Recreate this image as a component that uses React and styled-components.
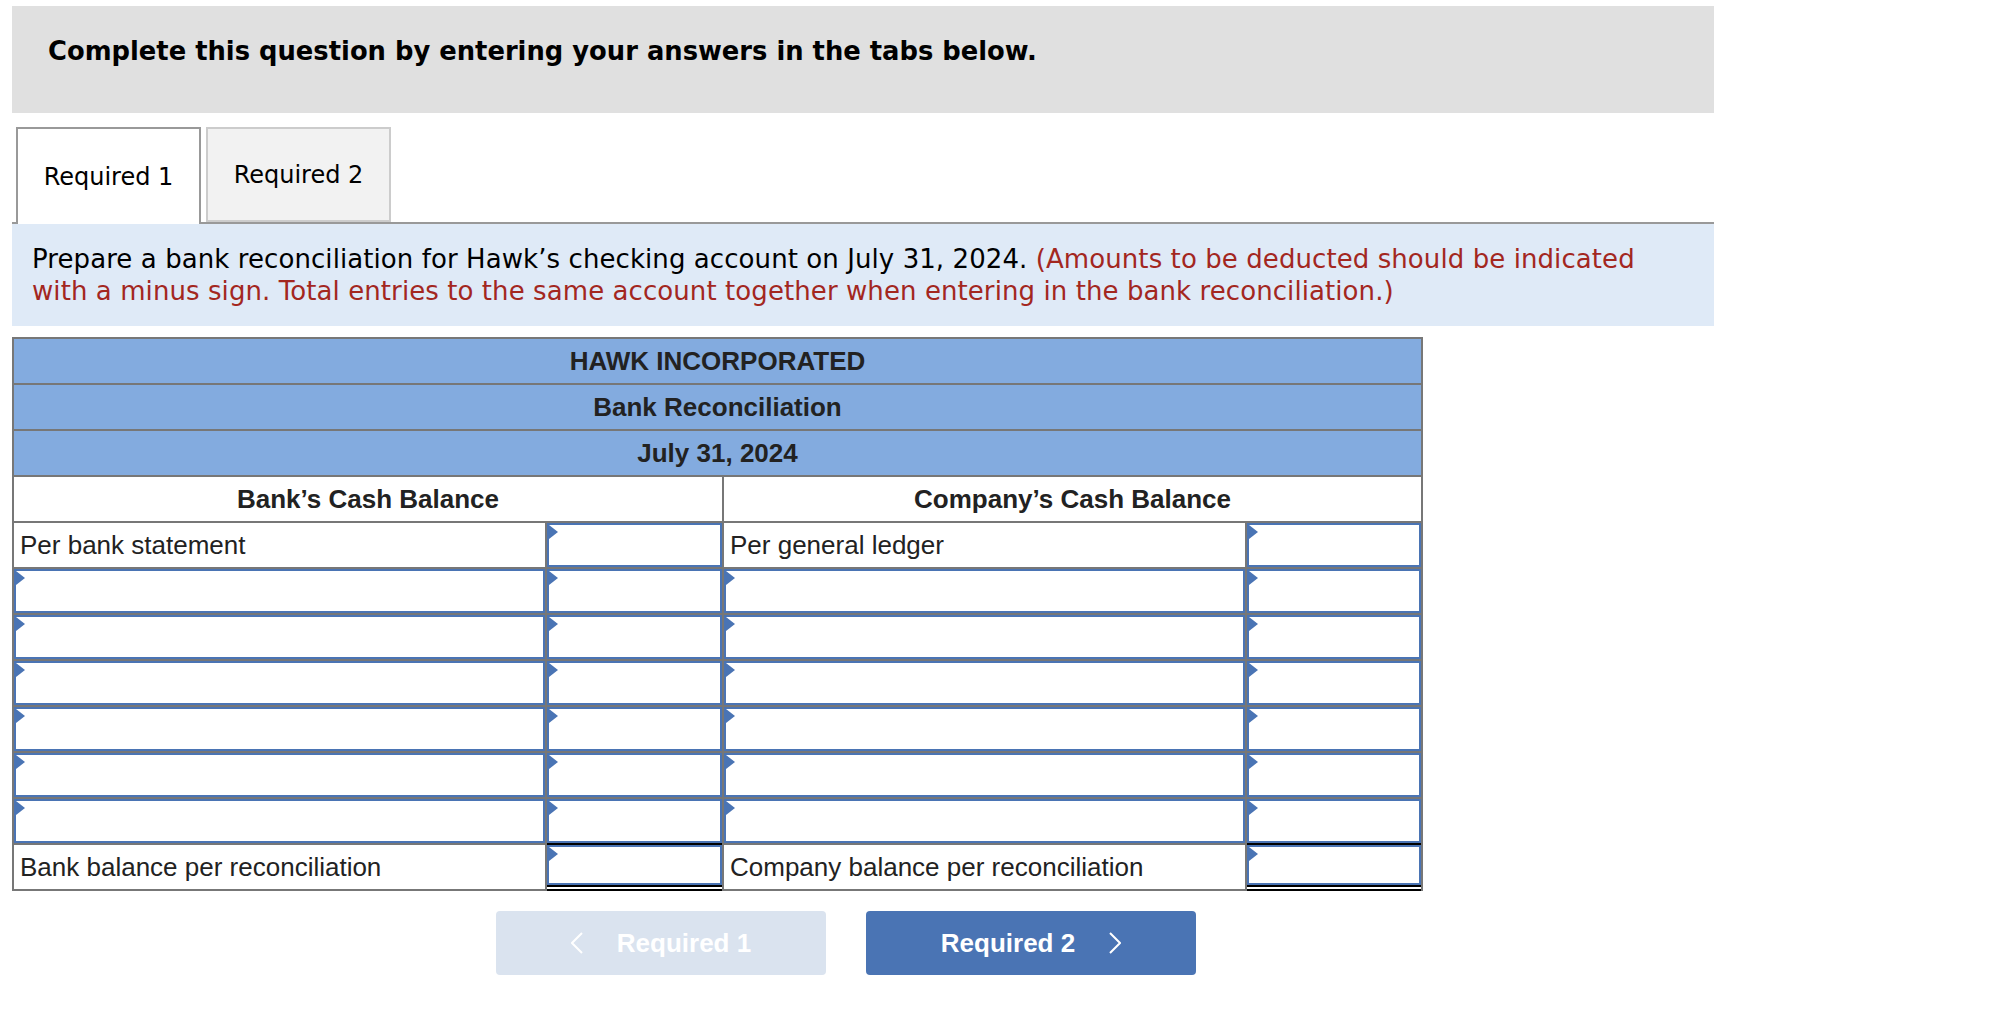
import React from "react";
import styled, { createGlobalStyle } from "styled-components";

const GlobalStyle = createGlobalStyle`
  html, body {
    margin: 0;
    padding: 0;
    background: #fff;
  }
  body {
    font-family: "DejaVu Sans", Verdana, sans-serif;
    color: #000;
  }
`;

const BLUE = "#4a74b4";
const GRID = "#777";

function Page() {
  return (
    <Wrapper>
      <Banner>Complete this question by entering your answers in the tabs below.</Banner>

      <TabBar>
        <Tab $active>Required 1</Tab>
        <Tab>Required 2</Tab>
      </TabBar>

      <Instructions>
        Prepare a bank reconciliation for Hawk’s checking account on July 31, 2024.{" "}
        <Note>
          (Amounts to be deducted should be indicated with a minus sign. Total entries to the
          same account together when entering in the bank reconciliation.)
        </Note>
      </Instructions>

      <Sheet>
        <TitleCell>HAWK INCORPORATED</TitleCell>
        <TitleCell>Bank Reconciliation</TitleCell>
        <TitleCell>July 31, 2024</TitleCell>

        <SideHead>Bank’s Cash Balance</SideHead>
        <SideHead>Company’s Cash Balance</SideHead>

        <Label>Per bank statement</Label>
        <Cell><Entry /></Cell>
        <Label>Per general ledger</Label>
        <Cell><Entry /></Cell>

        {[0, 1, 2, 3, 4, 5].map((i) => (
          <React.Fragment key={i}>
            <Cell><Entry /></Cell>
            <Cell><Entry /></Cell>
            <Cell><Entry /></Cell>
            <Cell><Entry /></Cell>
          </React.Fragment>
        ))}

        <Label>Bank balance per reconciliation</Label>
        <Cell $total><Entry $total /></Cell>
        <Label>Company balance per reconciliation</Label>
        <Cell $total><Entry $total /></Cell>
      </Sheet>

      <Nav>
        <NavButton disabled>
          <Chevron dir="left" />
          Required 1
        </NavButton>
        <NavButton>
          Required 2
          <Chevron dir="right" />
        </NavButton>
      </Nav>
    </Wrapper>
  );
}

function Entry({ $total }) {
  return (
    <EntryBox $total={$total}>
      <Marker />
      <Field type="text" />
    </EntryBox>
  );
}

function Chevron({ dir }) {
  const pts = dir === "left" ? "11,1 1,11 11,21" : "1,1 11,11 1,21";
  return (
    <svg width="12" height="22" viewBox="0 0 12 22">
      <polyline points={pts} fill="none" stroke="#fff" strokeWidth="2" />
    </svg>
  );
}

export default function App() {
  return (
    <>
      <GlobalStyle />
      <Page />
    </>
  );
}

const Wrapper = styled.div`
  width: 1702px;
  padding: 6px 0 40px 12px;
`;

const Banner = styled.div`
  background: #e0e0e0;
  height: 107px;
  box-sizing: border-box;
  padding: 29px 36px 0;
  font-size: 25.8px;
  line-height: 32px;
  font-weight: bold;
`;

const TabBar = styled.div`
  display: flex;
  gap: 5px;
  margin-top: 14px;
  padding-left: 4px;
  border-bottom: 2px solid #999;
`;

const Tab = styled.div`
  width: 185px;
  box-sizing: border-box;
  display: flex;
  align-items: center;
  justify-content: center;
  font-size: 24px;
  background: ${(p) => (p.$active ? "#fff" : "#f2f2f2")};
  border: 2px solid ${(p) => (p.$active ? "#999" : "#ccc")};
  border-bottom: ${(p) => (p.$active ? "none" : "2px solid #ccc")};
  margin-bottom: ${(p) => (p.$active ? "-2px" : "0")};
  height: ${(p) => (p.$active ? "97px" : "95px")};
`;

const Instructions = styled.div`
  background: #dfeaf7;
  padding: 19px 60px 19px 20px;
  font-size: 26px;
  line-height: 32px;
  letter-spacing: 0.08px;
`;

const Note = styled.span`
  color: #a3271f;
`;

const Sheet = styled.div`
  margin-top: 11px;
  width: 1411px;
  box-sizing: border-box;
  display: grid;
  grid-template-columns: 531px 175px 521px 174px;
  grid-auto-rows: 44px;
  gap: 2px;
  padding: 2px;
  background: ${GRID};
  font-family: "Liberation Sans", Arial, sans-serif;
  font-size: 26px;
  color: #222;
`;

const TitleCell = styled.div`
  grid-column: 1 / -1;
  background: #83abdf;
  display: flex;
  align-items: center;
  justify-content: center;
  font-weight: bold;
`;

const SideHead = styled.div`
  grid-column: span 2;
  background: #fff;
  display: flex;
  align-items: center;
  justify-content: center;
  font-weight: bold;
`;

const Label = styled.div`
  background: #fff;
  display: flex;
  align-items: center;
  padding-left: 6px;
  white-space: nowrap;
`;

const Cell = styled.div`
  background: #fff;
  display: flex;
  flex-direction: column;
  padding-bottom: ${(p) => (p.$total ? "4px" : "0")};
  box-shadow: ${(p) => (p.$total ? "0 -2px 0 #000, 0 2px 0 #000" : "none")};
`;

const EntryBox = styled.div`
  position: relative;
  flex: 1;
  display: flex;
  box-shadow: ${(p) => (p.$total ? "0 2px 0 #000" : "none")};
`;

const Marker = styled.span`
  position: absolute;
  top: 2px;
  left: 2px;
  width: 0;
  height: 0;
  border-top: 7px solid transparent;
  border-bottom: 7px solid transparent;
  border-left: 9px solid ${BLUE};
  pointer-events: none;
`;

const Field = styled.input`
  flex: 1;
  min-width: 0;
  margin: 0;
  padding: 0 8px;
  border: 2px solid ${BLUE};
  background: #fff;
  font: inherit;
  outline: none;
`;

const Nav = styled.div`
  display: flex;
  justify-content: center;
  gap: 40px;
  margin-top: 20px;
  padding-right: 34px;
`;

const NavButton = styled.button`
  width: 330px;
  height: 64px;
  border: none;
  border-radius: 4px;
  display: flex;
  align-items: center;
  justify-content: center;
  gap: 34px;
  background: ${(p) => (p.disabled ? "#dae3ef" : "#4a74b4")};
  color: #fff;
  font-family: "Liberation Sans", Arial, sans-serif;
  font-size: 26px;
  font-weight: bold;
  cursor: ${(p) => (p.disabled ? "default" : "pointer")};
`;
